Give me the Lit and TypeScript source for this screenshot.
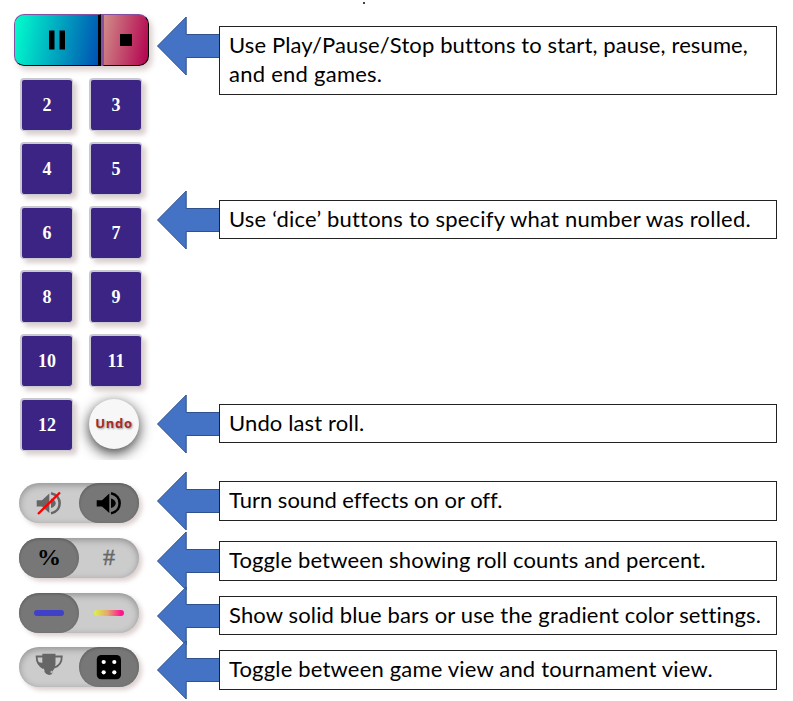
import { LitElement, html, css, svg } from "lit";
import { customElement, property } from "lit/decorators.js";

type Line = { text: string; spacing: number };

@customElement("call-out")
class CallOut extends LitElement {
  @property({ type: Array }) lines: Line[] = [];
  static styles = css`
    :host { display: flex; align-items: flex-start; height: 100%; }
    .arrow { flex: none; width: 63px; height: 60px; margin: -10.500px -1px -11px 0; overflow: visible; }
    .box { box-sizing: border-box; flex: 1; height: 100%; border: 1px solid #222; background: #fff;
      padding: 3px 9px 0; color: #000; font: 22px/29px Lato, sans-serif; white-space: nowrap; position: relative; }
    .line { display: block; font-variant-ligatures: none; }
  `;
  render() {
    return html`
      <svg class="arrow" viewBox="0 0 63 60">
        <path d="M.5 30 29.200 1v17.500H63v23H29.200V59Z" fill="#4472c4" stroke="#2f528f" stroke-width="1" />
      </svg>
      <div class="box">
        ${this.lines.map((l) => html`<span class="line" style="letter-spacing:${l.spacing}px">${l.text}</span>`)}
      </div>`;
  }
}

@customElement("toggle-pill")
class TogglePill extends LitElement {
  @property() on = "left";
  static styles = css`
    :host { display: block; }
    .pill { display: grid; grid-template-columns: 60px 60px; width: 120px; height: 40px; border-radius: 20px;
      background: #ccc; position: relative; box-shadow: 3px 3px 5px #dccfcf, inset 0 2px 7px rgba(0,0,0,.3); }
    .knob { position: absolute; top: 0; left: 0; width: 60px; height: 40px; border-radius: 20px; background: #777;
      box-shadow: inset 0 1px 3px rgba(0,0,0,.25); }
    .knob.right { left: 60px; }
    .side { position: relative; display: flex; align-items: center; justify-content: center; }
  `;
  render() {
    return html`<div class="pill">
      <span class="knob ${this.on}"></span>
      <span class="side"><slot name="a"></slot></span>
      <span class="side"><slot name="b"></slot></span>
    </div>`;
  }
}

const speaker = svg`
  <path d="M.7 12.200H6L13.300 5.500v19.500L6 18.400H.7Z" />
  <path d="M15 10.500q4.700 1.500 4.700 4.800t-4.700 4.800Z" />
  <path d="M15 5.300c11.500 2.500 11.500 17.500 0 20" fill="none" stroke="currentColor" stroke-width="2.600" />`;

@customElement("app-root")
class AppRoot extends LitElement {
  static styles = css`
    :host { display: block; width: 793px; height: 701px; background: #fff; overflow: hidden; position: relative; }
    .page { display: grid; grid-template-columns: 157px 620px; height: 701px; }
    .dot { position: absolute; left: 363px; top: 2px; width: 2px; height: 2px; background: #444; }
    .panel { padding-top: 14px; }
    .player { display: flex; box-sizing: border-box; width: 135px; height: 52px; margin-left: 14px;
      border-radius: 10px; box-shadow: 3px 4px 6px #d9cccc; }
    .play, .stop { box-sizing: border-box; display: flex; align-items: center; justify-content: center;
      border: 1px solid #000; border-top-color: #8650a0; }
    .play { width: 87px; border-left-color: #8650a0; border-right-width: 3px; border-radius: 10px 0 0 10px;
      background: linear-gradient(100deg, #00ffcd, #0051b3); }
    .stop { width: 48px; border-left: 3px solid #8650a0; border-radius: 0 10px 10px 0;
      background: linear-gradient(100deg, #d08c88, #b3004f); }
    .bars { width: 16px; height: 20px; }
    .square { width: 12px; height: 12px; background: #000; }
    .dice { display: grid; grid-template-columns: 53px 53px; grid-auto-rows: 53px; gap: 11px 16px;
      padding: 12px 0 0 20px; height: 382px; overflow: hidden; }
    .die { box-sizing: border-box; display: flex; align-items: center; justify-content: center;
      border: 2px solid #c9c9d0; border-right-width: 1px; border-bottom-width: 1px; border-radius: 4px;
      background: #3b2483; color: #fff; font: bold 18px "Liberation Serif", serif; box-shadow: 4px 4px 5px #dccfcf; }
    .undo { box-sizing: border-box; width: 50px; height: 50px; margin: 1px 0 0; padding-bottom: 2px; border-radius: 50%;
      background: #f7f7f7; color: #a52a2a; display: flex; align-items: center; justify-content: center;
      font: bold 13px "Open Sans", sans-serif; letter-spacing: .7px; text-shadow: 1px 1px 2px #999;
      box-shadow: 0 4px 14px rgba(0,0,0,.8); }
    .toggles { display: grid; gap: 14.750px; padding: 23px 0 0 19px; }
    .icon { display: block; width: 26px; height: 30px; }
    .cup { width: 28px; }
    .muted { color: #666; }
    .pct { font: bold 24px "Liberation Serif", serif; color: #000; }
    .hash { font: 24px "Liberation Serif", serif; color: #666; -webkit-text-stroke: .4px #666; }
    .bar { width: 30px; height: 6px; border-radius: 3px; background: #4040c8; }
    .grad { background: linear-gradient(90deg, #dcf24a, #e6a86c 45%, #ff1493 90%); }
    .notes { display: grid; padding-top: 26px; align-content: start;
      grid-template-rows: 69px 105px 39px 165px 39px 38px 40px 20px 40px 15px 39px 15px 40px; }
    .row:nth-child(1) { grid-row: 1; }
    .row:nth-child(2) { grid-row: 3; }
    .row:nth-child(3) { grid-row: 5; }
    .row:nth-child(4) { grid-row: 7; }
    .row:nth-child(5) { grid-row: 9; }
    .row:nth-child(6) { grid-row: 11; }
    .row:nth-child(7) { grid-row: 13; }
  `;
  notes: Line[][] = [
    [{ text: "Use Play/Pause/Stop buttons to start, pause, resume,", spacing: 0.12 }, { text: "and end games.", spacing: 0.25 }],
    [{ text: "Use ‘dice’ buttons to specify what number was rolled.", spacing: 0.21 }],
    [{ text: "Undo last roll.", spacing: 0.13 }],
    [{ text: "Turn sound effects on or off.", spacing: 0 }],
    [{ text: "Toggle between showing roll counts and percent.", spacing: 0.14 }],
    [{ text: "Show solid blue bars or use the gradient color settings.", spacing: 0.145 }],
    [{ text: "Toggle between game view and tournament view.", spacing: 0.18 }],
  ];
  render() {
    return html`<main class="page">
      <div class="panel">
        <div class="player">
          <div class="play"><svg class="bars" viewBox="0 0 16 20"><path d="M0 .5h5.500v19H0ZM10.500 .5h5.500v19h-5.500Z" /></svg></div>
          <div class="stop"><span class="square"></span></div>
        </div>
        <div class="dice">
          ${[2, 3, 4, 5, 6, 7, 8, 9, 10, 11, 12].map((n) => html`<div class="die">${n}</div>`)}
          <div class="undo">Undo</div>
        </div>
        <div class="toggles">
          <toggle-pill on="right">
            <svg slot="a" class="icon muted" viewBox="0 0 26 30" fill="currentColor">${speaker}
              <path d="M2 26 24 4.500" stroke="red" stroke-width="2.400" /></svg>
            <svg slot="b" class="icon" viewBox="0 0 26 30" fill="currentColor">${speaker}</svg>
          </toggle-pill>
          <toggle-pill><span slot="a" class="pct">%</span><span slot="b" class="hash">#</span></toggle-pill>
          <toggle-pill><span slot="a" class="bar"></span><span slot="b" class="bar grad"></span></toggle-pill>
          <toggle-pill on="right">
            <svg slot="a" class="icon cup muted" viewBox="0 0 28 30" fill="currentColor">
              <path d="M7.300 1.700H20.500V12q0 4-2.500 6.500v2q-1.500 2.500-4 2.500t-4.500-3v-2Q7.300 16 7.300 12Z" />
              <path d="M8 4.500H1.600Q1.600 13 8.500 15.500M20 4.500h6.800Q26.800 13 19.500 15.500" fill="none" stroke="currentColor" stroke-width="1.800" />
              <path d="M2.500 10l5.500 1v6q-4-2-5.500-7Z" />
              <circle cx="16.700" cy="20" r="1.300" fill="#bbb" /></svg>
            <svg slot="b" class="icon" viewBox="0 0 26 30">
              <rect x=".8" y="3" width="24.200" height="24.200" rx="4.500" />
              <g fill="#fff"><circle cx="7.700" cy="10" r="2.100" /><circle cx="18.300" cy="10" r="2.100" />
              <circle cx="7.700" cy="20.300" r="2.100" /><circle cx="18.300" cy="20.300" r="2.100" /></g></svg>
          </toggle-pill>
        </div>
      </div>
      <div class="notes">${this.notes.map((n) => html`<call-out class="row" .lines=${n}></call-out>`)}</div>
      <span class="dot"></span>
    </main>`;
  }
}
